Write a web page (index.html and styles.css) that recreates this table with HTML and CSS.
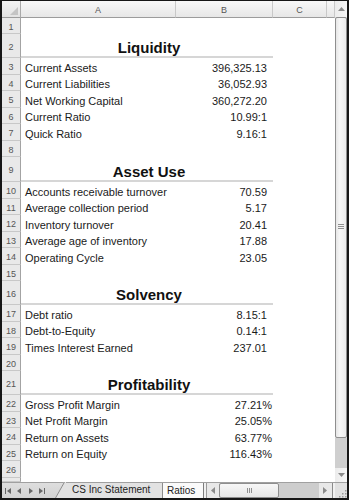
FILE: index.html
```html
<!DOCTYPE html>
<html>
<head>
<meta charset="utf-8">
<link rel="stylesheet" href="styles.css">
</head>
<body>
<div class="window">
  <div class="main">
    <div class="sheet">
      <div class="row colhead">
        <div class="corner"><svg width="8" height="8" viewBox="0 0 8 8"><polygon points="8,0 8,8 0,8" fill="#c4c4c4"/></svg></div>
        <div class="ch">A</div><div class="ch">B</div><div class="ch">C</div><div class="ch"></div>
      </div>
      <div class="row r16"><div class="rh">1</div></div>
      <div class="row r24"><div class="rh">2</div><div class="head">Liquidity</div></div>
      <div class="row r17"><div class="rh">3</div><div class="lab">Current Assets</div><div class="num">396,325.13</div></div>
      <div class="row r16"><div class="rh">4</div><div class="lab">Current Liabilities</div><div class="num">36,052.93</div></div>
      <div class="row r17"><div class="rh">5</div><div class="lab">Net Working Capital</div><div class="num">360,272.20</div></div>
      <div class="row r16"><div class="rh">6</div><div class="lab">Current Ratio</div><div class="num">10.99:1</div></div>
      <div class="row r17"><div class="rh">7</div><div class="lab">Quick Ratio</div><div class="num">9.16:1</div></div>
      <div class="row r16"><div class="rh">8</div></div>
      <div class="row r25"><div class="rh">9</div><div class="head">Asset Use</div></div>
      <div class="row r17"><div class="rh">10</div><div class="lab">Accounts receivable turnover</div><div class="num">70.59</div></div>
      <div class="row r16"><div class="rh">11</div><div class="lab">Average collection period</div><div class="num">5.17</div></div>
      <div class="row r17"><div class="rh">12</div><div class="lab">Inventory turnover</div><div class="num">20.41</div></div>
      <div class="row r16"><div class="rh">13</div><div class="lab">Average age of inventory</div><div class="num">17.88</div></div>
      <div class="row r17"><div class="rh">14</div><div class="lab">Operating Cycle</div><div class="num">23.05</div></div>
      <div class="row r16"><div class="rh">15</div></div>
      <div class="row r24"><div class="rh">16</div><div class="head">Solvency</div></div>
      <div class="row r17"><div class="rh">17</div><div class="lab">Debt ratio</div><div class="num">8.15:1</div></div>
      <div class="row r16"><div class="rh">18</div><div class="lab">Debt-to-Equity</div><div class="num">0.14:1</div></div>
      <div class="row r17"><div class="rh">19</div><div class="lab">Times Interest Earned</div><div class="num">237.01</div></div>
      <div class="row r16"><div class="rh">20</div></div>
      <div class="row r24"><div class="rh">21</div><div class="head">Profitability</div></div>
      <div class="row r17"><div class="rh">22</div><div class="lab">Gross Profit Margin</div><div class="num pct">27.21%</div></div>
      <div class="row r16"><div class="rh">23</div><div class="lab">Net Profit Margin</div><div class="num pct">25.05%</div></div>
      <div class="row r17"><div class="rh">24</div><div class="lab">Return on Assets</div><div class="num pct">63.77%</div></div>
      <div class="row r16"><div class="rh">25</div><div class="lab">Return on Equity</div><div class="num pct">116.43%</div></div>
      <div class="row r17"><div class="rh">26</div></div>
      <div class="row rest"><div class="rh"></div></div>
    </div>
    <div class="vscroll">
      <div class="vbtn"><svg width="7" height="4" viewBox="0 0 7 4"><polygon points="0,4 7,4 3.5,0" fill="#8a8a8a"/></svg></div>
      <div class="vthumb"><span class="hgrip"></span><span class="hgrip"></span><span class="hgrip"></span></div>
      <div class="vtrack"></div>
      <div class="vbtn down"><svg width="7" height="4" viewBox="0 0 7 4"><polygon points="0,0 7,0 3.5,4" fill="#8a8a8a"/></svg></div>
    </div>
  </div>
  <div class="tabbar">
    <div class="nav">
      <svg width="6" height="6" viewBox="0 0 6 6"><rect x="0" y="0" width="1" height="6" fill="#666"/><polygon points="6,0 6,6 2,3" fill="#666"/></svg>
      <svg width="5" height="6" viewBox="0 0 5 6"><polygon points="4,0 4,6 0,3" fill="#666"/></svg>
      <svg width="5" height="6" viewBox="0 0 5 6"><polygon points="1,0 1,6 5,3" fill="#666"/></svg>
      <svg width="6" height="6" viewBox="0 0 6 6"><polygon points="0,0 0,6 4,3" fill="#666"/><rect x="5" y="0" width="1" height="6" fill="#666"/></svg>
    </div>
    <div class="tab">
      <svg class="slant" width="11" height="16" viewBox="0 0 11 16"><polygon points="0,16 9,0 11,0 11,16" fill="#e2e2e2"/><line x1="0.5" y1="16" x2="9.5" y2="0" stroke="#8c8c8c" stroke-width="1"/></svg>
      <span class="tabtext">CS Inc Statement</span>
    </div>
    <div class="tab active"><span class="tabtext">Ratios</span></div>
    <div class="hscroll">
      <div class="split"></div>
      <div class="hbtn"><svg width="4" height="7" viewBox="0 0 4 7"><polygon points="4,0 4,7 0,3.5" fill="#8a8a8a"/></svg></div>
      <div class="hthumb"><span class="vgrip"></span><span class="vgrip"></span><span class="vgrip"></span></div>
      <div class="htrack"></div>
      <div class="hbtn"><svg width="4" height="7" viewBox="0 0 4 7"><polygon points="0,0 0,7 4,3.5" fill="#8a8a8a"/></svg></div>
      <div class="split2"></div>
    </div>
    <div class="sizegrip">
      <svg width="10" height="10" viewBox="0 0 10 10" fill="#9a9a9a"><rect x="8" y="2" width="1.5" height="1.5"/><rect x="5" y="5" width="1.5" height="1.5"/><rect x="8" y="5" width="1.5" height="1.5"/><rect x="2" y="8" width="1.5" height="1.5"/><rect x="5" y="8" width="1.5" height="1.5"/><rect x="8" y="8" width="1.5" height="1.5"/></svg>
    </div>
  </div>
</div>
</body>
</html>
```
FILE: styles.css
```css
html, body {
  margin: 0;
  padding: 0;
  background: #fff;
}

.window {
  width: 349px;
  height: 500px;
  box-sizing: border-box;
  border: 2px solid #161616;
  border-top-width: 1px;
  display: flex;
  flex-direction: column;
  overflow: hidden;
  font-family: "Liberation Sans", Arial, sans-serif;
  color: #1a1a1a;
}

.main {
  display: flex;
  flex: 1;
  min-height: 0;
}

.sheet {
  width: 333px;
  display: flex;
  flex-direction: column;
  overflow: hidden;
}

.row {
  display: grid;
  grid-template-columns: 19px 155px 97px 54px 8px;
  flex: none;
}

.r16 { height: 16px; }
.r17 { height: 17px; }
.r24 { height: 24px; }
.r25 { height: 25px; }
.rest { flex: 1; }

.colhead { height: 17px; }

.corner {
  box-sizing: border-box;
  background: linear-gradient(#f3f3f3, #e2e2e2);
  border-right: 1px solid #a9a9a9;
  border-bottom: 1px solid #9c9c9c;
  display: flex;
  justify-content: flex-end;
  align-items: flex-end;
  padding: 0 2px 2px 0;
}

.ch {
  box-sizing: border-box;
  background: linear-gradient(#f8f8f8, #e7e7e7);
  border-right: 1px solid #c9c9c9;
  border-bottom: 1px solid #9c9c9c;
  font-size: 9px;
  color: #555;
  display: flex;
  align-items: center;
  justify-content: center;
  padding-top: 1px;
}

.rh {
  box-sizing: border-box;
  background: #e9e9e9;
  border-right: 1px solid #a3a3a3;
  border-bottom: 1px solid #c8c8c8;
  font-size: 9px;
  color: #555;
  display: flex;
  align-items: center;
  justify-content: center;
  padding-top: 2px;
}

.lab,
.num {
  align-self: end;
  font-size: 11px;
  line-height: 14px;
  white-space: nowrap;
  overflow: hidden;
}

.lab { padding-left: 4px; }

.num {
  text-align: right;
  padding-right: 6px;
}

.num.pct { padding-right: 1px; }

.head {
  grid-column: 2 / 4;
  box-sizing: border-box;
  border-bottom: 2px solid #d6d6d6;
  display: flex;
  align-items: flex-end;
  justify-content: center;
  font-weight: bold;
  font-size: 15px;
  line-height: 16px;
  color: #111;
  padding-left: 4px;
}

/* vertical scrollbar */
.vscroll {
  width: 12px;
  display: flex;
  flex-direction: column;
  background: #dcdcdc;
}

.vbtn {
  height: 16px;
  flex: none;
  box-sizing: border-box;
  background: linear-gradient(90deg, #ececec, #f6f6f6);
  display: flex;
  align-items: center;
  justify-content: center;
}

.vbtn.down { height: 14px; }

.vthumb {
  height: 421px;
  flex: none;
  box-sizing: border-box;
  border: 1px solid #8e8e8e;
  border-radius: 2px;
  background: linear-gradient(90deg, #e6e6e6, #f7f7f7 40%, #ececec);
  display: flex;
  flex-direction: column;
  align-items: center;
  justify-content: center;
  gap: 1px;
  padding-bottom: 2px;
}

.hgrip {
  width: 6px;
  height: 1px;
  background: #8f8f8f;
}

.vtrack {
  flex: 1;
  background: #cfcfcf;
}

/* tab bar */
.tabbar {
  height: 16px;
  flex: none;
  display: flex;
  background: linear-gradient(#dedede, #d2d2d2);
  border-top: 1px solid #a0a0a0;
  box-sizing: border-box;
}

.nav {
  width: 53px;
  display: flex;
  align-items: center;
  gap: 6px;
  padding-left: 3px;
  box-sizing: border-box;
}

.tab {
  display: flex;
  align-items: flex-end;
  height: 15px;
}

.tab .slant { flex: none; display: block; }

.tabtext {
  font-size: 10px;
  line-height: 12px;
  color: #222;
  white-space: nowrap;
}

.tab:not(.active) {
  width: 108px;
}

.tab:not(.active) .tabtext {
  background: #e2e2e2;
  height: 15px;
  line-height: 14px;
  padding-left: 6px;
  width: 97px;
  box-sizing: border-box;
  border-right: 1px solid #8c8c8c;
}

.tab.active {
  width: 40px;
  background: #fafafa;
  padding-left: 4px;
  box-sizing: border-box;
  overflow: hidden;
}

.tab.active .tabtext {
  line-height: 14px;
}

.hscroll {
  width: 132px;
  display: flex;
  background: #d4d4d4;
}

.split {
  width: 4px;
  background: linear-gradient(90deg, #7d7d7d 0 1px, #f0f0f0 1px 3px, #9a9a9a 3px);
}

.hbtn {
  width: 12px;
  display: flex;
  align-items: center;
  justify-content: center;
  background: #e8e8e8;
}

.hthumb {
  width: 60px;
  box-sizing: border-box;
  border: 1px solid #8e8e8e;
  border-radius: 2px;
  background: linear-gradient(#f7f7f7, #e6e6e6);
  display: flex;
  align-items: center;
  justify-content: center;
  gap: 1px;
}

.vgrip {
  width: 1px;
  height: 5px;
  background: #8f8f8f;
}

.htrack {
  flex: 1;
  background: #cdcdcd;
}

.split2 {
  width: 4px;
  background: linear-gradient(90deg, #e8e8e8 0 1px, #8a8a8a 1px 2px, #f0f0f0 2px);
}

.sizegrip {
  width: 12px;
  display: flex;
  align-items: flex-end;
  justify-content: flex-end;
  background: #e0e0e0;
}
```
